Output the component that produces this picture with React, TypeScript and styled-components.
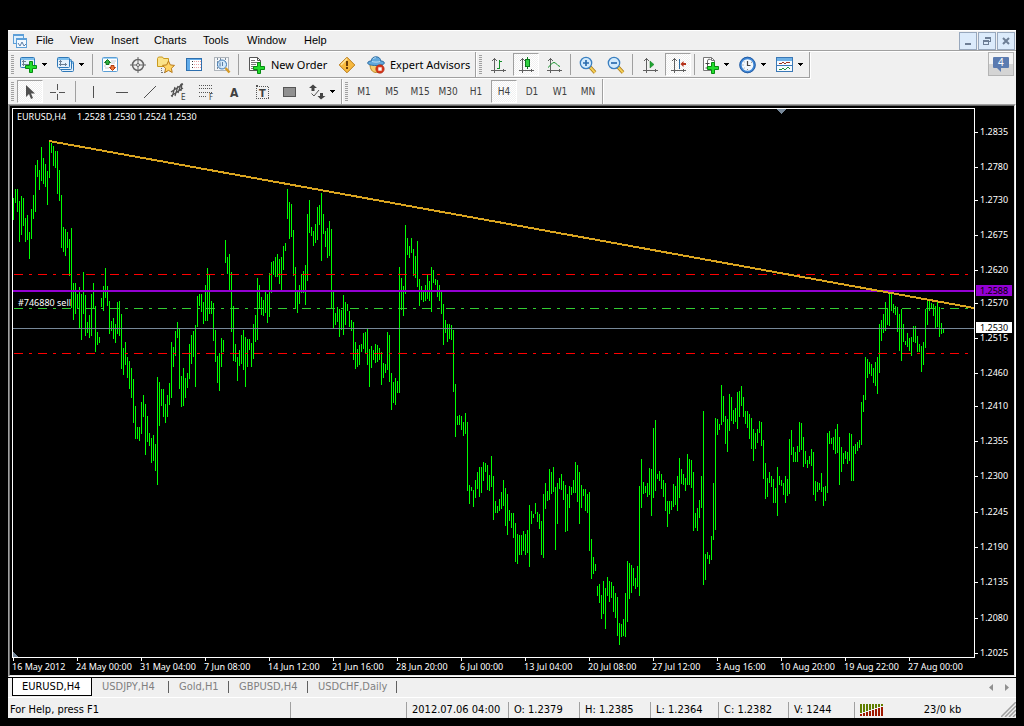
import React from "react";
import styled, { createGlobalStyle, css } from "styled-components";

const GlobalStyle = createGlobalStyle`
  body { margin: 0; background: #000; }
  button { font: inherit; color: inherit; background: none; border: 0; padding: 0; margin: 0; }
`;

const uiFont = `"Noto Sans", "Open Sans", sans-serif`;
const chartFont = `"DejaVu Sans Condensed", "DejaVu Sans", sans-serif`;

const Desktop = styled.div`
  background: #000;
  padding: 30px 8px 8px;
  box-sizing: border-box;
  min-height: 100vh;
`;

const Window = styled.main`
  display: flex;
  flex-direction: column;
  background: #f0f0f0;
  color: #000;
  font-family: ${uiFont};
  font-size: 11px;
  line-height: 16px;
  overflow: hidden;
`;

/* ---------- menu bar ---------- */

const MenuBar = styled.header`
  display: flex;
  align-items: center;
  height: 19px;
  padding-left: 4px;
  border-top: 1px solid #fff;
  border-bottom: 1px solid #a0a0a0;
  box-shadow: 0 1px 0 #fff;
  margin-bottom: 1px;
`;

const Menus = styled.nav`
  display: flex;
  flex: 1;
  margin-left: 8px;
  padding-bottom: 2px;
`;

const MenuItem = styled.button<{ $w: number }>`
  width: ${(p) => p.$w}px;
  text-align: left;
  white-space: nowrap;
  font-family: "Liberation Sans", sans-serif;
`;

const WindowButtons = styled.div`
  display: flex;
  gap: 1px;
  padding-right: 1px;
`;

const WindowButton = styled.button`
  width: 18px;
  height: 18px;
  border: 1px solid #98a8bd;
  background: #dcebfb;
  display: grid;
  place-items: center;
`;

/* ---------- tool bars ---------- */

const ToolRow = styled.div<{ $h: number }>`
  display: flex;
  height: ${(p) => p.$h}px;
`;

const ToolBar = styled.div`
  display: flex;
  align-items: center;
  border-right: 1px solid #a0a0a0;
  border-bottom: 1px solid #a0a0a0;
  box-shadow: 1px 1px 0 #fff;
  margin-bottom: 1px;
`;

const Grip = styled.span`
  width: 3px;
  height: 20px;
  margin: 0 2px 0 3px;
  background: repeating-linear-gradient(#a0a0a0 0 1px, #f0f0f0 1px 2px);
`;

const ToolSeparator = styled.span`
  width: 1px;
  height: 21px;
  margin: 0 3px 0 2px;
  background: #a0a0a0;
`;

const LowerToolBar = styled(ToolBar)`
  border-bottom: 0;
  margin-bottom: 0;

  & > ${ToolSeparator} {
    margin: 0 4px 0 3px;
  }
`;

const ToolButton = styled.button<{ $pressed?: boolean }>`
  width: 26px;
  height: 23px;
  margin: 0 1px;
  display: grid;
  place-items: center;
  box-sizing: border-box;
  font-family: ${chartFont};
  font-size: 10px;
  color: #404040;
  ${(p) =>
    p.$pressed &&
    css`
      background: repeating-conic-gradient(#fff 0 25%, #f0f0f0 0 50%) 0 0 / 2px 2px;
      border: 1px solid;
      border-color: #a0a0a0 #fff #fff #a0a0a0;
    `}
`;

const DropButton = styled.button`
  display: flex;
  align-items: center;
  gap: 4px;
  width: 37px;
  padding-left: 4px;
`;

const LabelButton = styled.button<{ $w: number }>`
  display: flex;
  align-items: center;
  gap: 5px;
  width: ${(p) => p.$w}px;
  padding-left: 6px;
  white-space: nowrap;
`;

const Spacer = styled.span`
  flex: 1;
`;

const ChatButton = styled.button`
  width: 26px;
  height: 24px;
  margin-right: 2px;
  border: 1px solid #b4b4b4;
  background: linear-gradient(#f4f4f4 50%, #d4d4d4 50%);
  display: grid;
  place-items: center;
`;

/* ---------- chart window ---------- */

const ChartFrame = styled.section`
  border: 1px solid;
  border-color: #a0a0a0 #fff #fff #a0a0a0;
`;

const ChartInner = styled.div`
  border: 1px solid;
  border-color: #696969 #e3e3e3 #e3e3e3 #696969;
  background: #000;
`;

const ChartSvg = styled.svg`
  display: block;
  width: 100%;
  height: auto;
  font-family: ${uiFont};
  font-size: 9px;
`;

const Tabs = styled.nav`
  display: flex;
  height: 19px;
  border-top: 1px solid #000;
  padding-left: 4px;
  font-family: ${chartFont};
  font-size: 11px;
`;

const Tab = styled.button<{ $w: number; $active?: boolean }>`
  width: ${(p) => p.$w}px;
  height: 18px;
  box-sizing: border-box;
  padding-left: 10px;
  color: #808080;
  display: flex;
  align-items: center;
  white-space: nowrap;
  ${(p) =>
    p.$active
      ? css`
          padding-left: 9px;
          background: #fff;
          color: #000;
          border: 1px solid #000;
          border-top: 0;
        `
      : css`
          &::after {
            content: "";
            width: 1px;
            height: 12px;
            background: #606060;
            margin-left: auto;
          }
        `}
`;

const TabArrows = styled.div`
  margin-left: auto;
  padding-right: 7px;
  display: flex;
  align-items: center;
  gap: 12px;
`;

/* ---------- status bar ---------- */

const StatusBar = styled.footer`
  display: flex;
  align-items: center;
  height: 17px;
  padding-top: 3px;
  border-top: 1px solid #fff;
  font-family: ${chartFont};
  font-size: 11px;
`;

const StatusCell = styled.span<{ $w?: number; $first?: boolean }>`
  ${(p) => (p.$w ? `flex: 0 0 ${p.$w}px;` : "flex: 1;")}
  height: 16px;
  box-sizing: border-box;
  padding-left: ${(p) => (p.$first ? 2 : 5)}px;
  border-left: ${(p) => (p.$first ? 0 : 1)}px solid #a0a0a0;
  white-space: nowrap;
  display: flex;
  align-items: center;
`;

const Traffic = styled.span`
  flex: 1;
  text-align: center;
`;

/* ---------- icons ---------- */

const IconSvg = styled.svg`
  flex: none;
  overflow: visible;
`;

const Icon = ({ children, smooth, s = 18 }: { children: React.ReactNode; smooth?: boolean; s?: number }) => (
  <IconSvg width={s} height={s} viewBox={`0 0 ${s} ${s}`} shapeRendering={smooth ? "auto" : "crispEdges"} aria-hidden="true">
    {children}
  </IconSvg>
);

const Caret = () => (
  <IconSvg width="5" height="3" viewBox="0 0 5 3" shapeRendering="crispEdges" aria-hidden="true">
    <path d="M0 0h5v1H4v1H3v1H2V2H1V1H0z" fill="#000" />
  </IconSvg>
);

const Plus = ({ x, y }: { x: number; y: number }) => (
  <path
    transform={`translate(${x} ${y})`}
    d="M4.500.5h3v4h4v3h-4v4h-3v-4h-4v-3h4z"
    fill="#22dd2c"
    stroke="#078a12"
  />
);

const Pane = ({ x, y, w, h }: { x: number; y: number; w: number; h: number }) => (
  <g>
    <rect x={x + 0.5} y={y + 0.5} width={w} height={h} rx="1" fill="#e4f1fc" stroke="#2e78b8" />
    <rect x={x + 1} y={y + 1} width={w - 1} height="2" fill="#7fc0ee" />
  </g>
);

const NewChartIcon = () => (
  <Icon smooth>
    <Pane x={0} y={1} w={14} h={10} />
    <path d="M3.500 4v6M2 8.500h8M2 5.500h4" stroke="#6c7f93" fill="none" />
    <Plus x={5} y={5} />
  </Icon>
);

const ProfilesIcon = () => (
  <Icon smooth>
    <Pane x={4} y={5} w={12} h={10} />
    <Pane x={2} y={3} w={12} h={10} />
    <Pane x={0} y={1} w={12} h={10} />
    <path d="M3.500 4v6M2 8.500h8M2 5.500h3M8.500 7v3" stroke="#6c7f93" fill="none" />
  </Icon>
);

const MarketIcon = () => (
  <Icon smooth>
    <rect x="1.500" y="1.500" width="15" height="14" rx="1" fill="#fff" stroke="#5b9fd6" />
    <path d="M2 2h14v1H2z" fill="#a4d2f4" />
    <path d="M10 5h5M4 12h4M10 7h4M3 10h2" stroke="#c5ccd4" />
    <path d="M6.500 3.500l3 3h-1.500v2h-3v-2H3.500z" fill="#2fb040" stroke="#11701e" />
    <path d="M11.500 14.500l-3-3H10v-2h3v2h1.500z" fill="#f07a3c" stroke="#b23c10" />
  </Icon>
);

const CrosshairIcon = () => (
  <Icon smooth>
    <circle cx="9" cy="9" r="5.500" fill="none" stroke="#666" strokeWidth="1.500" />
    <path d="M9 1v16M1 9h16" stroke="#666" />
    <circle cx="9" cy="9" r="1.500" fill="#f0f0f0" stroke="#666" />
  </Icon>
);

const star = "M11.500 5l1.800 3.900 4.200.5-3.100 2.900.8 4.200-3.700-2.100-3.700 2.100.8-4.200-3.100-2.900 4.200-.5z";

const NavigatorIcon = () => (
  <Icon smooth>
    <path d="M.5 2.500l1-1.500h4l1 1.500h5v8H.5z" fill="#fbe389" stroke="#c99a1f" />
    <path d="M4.500 12v5M5 16.500h4" stroke="#777" strokeDasharray="1 1" />
    <path d={star} fill="#ffd566" stroke="#b97a18" />
  </Icon>
);

const TerminalIcon = () => (
  <Icon>
    <rect x="1.500" y="2.500" width="15" height="12" fill="#fff" stroke="#2e6fae" />
    <rect x="2" y="3" width="3" height="11" fill="#62acea" />
    <path d="M9 5.500h7M9 8.500h7M9 11.500h7" stroke="#e8a0a0" strokeDasharray="1 1" />
    <path d="M7 5.500h1M7 8.500h1M7 11.500h1" stroke="#333" />
    <path d="M2 3.500h14" stroke="#62acea" />
  </Icon>
);

const TesterIcon = () => (
  <Icon smooth>
    <rect x="1.500" y="1.500" width="14" height="13" fill="#f4f6f8" stroke="#aeb4ba" />
    <path d="M4.500 2v11M7.500 2v11M12.500 2v6" stroke="#7c8c9c" strokeDasharray="2 1" />
    <circle cx="9" cy="8.500" r="4.500" fill="#cfe8fb" fillOpacity=".85" stroke="#3c78b4" />
    <path d="M7 6.500v4M9.500 6v4" stroke="#5b7fa6" />
    <path d="M12.500 12l4 4.500" stroke="#d59a28" strokeWidth="2.500" />
  </Icon>
);

const OrderIcon = () => (
  <Icon smooth>
    <path d="M1.500 1.500h8l3 3v10h-11z" fill="#fff" stroke="#555" />
    <path d="M9.500 1.500v3h3" fill="none" stroke="#555" />
    <path d="M3 4.500h4M3 6.500h7M3 8.500h5M3 10.500h3M3 12.500h3" stroke="#777" />
    <Plus x={5} y={6} />
  </Icon>
);

const AlertIcon = () => (
  <Icon smooth>
    <path d="M9 1.200L16.800 9 9 16.800 1.200 9z" fill="#f7b93e" stroke="#b87a1a" />
    <path d="M9 2.800L3 9" stroke="#ffe39a" strokeWidth="1.500" />
    <path d="M8 5h2v5H8zM8 11h2v2H8z" fill="#6a3c08" />
  </Icon>
);

const ExpertIcon = () => (
  <Icon smooth>
    <path d="M3 8c0 5 2 8.500 6.500 8.500S15 12 15 8z" fill="#f6cd6c" stroke="#bb8624" />
    <path d="M.7 7c0-1.500 2-2 3.500-2C4.500 2.500 6 .8 9 .8s4.500 1.700 4.800 4.200c1.500 0 3.500.5 3.500 2 0 1.800-4 2.500-8.300 2.500S.7 8.800.7 7z" fill="#62a8dc" stroke="#2f6da3" />
    <path d="M5 5.500c2 .8 6 .8 8 0M6 3c1-1 2-1.300 3-1.300" stroke="#b9def7" fill="none" />
    <circle cx="13" cy="13" r="4.200" fill="#d8391d" stroke="#9e1c0b" strokeWidth=".6" />
    <rect x="11.300" y="11.300" width="3.400" height="3.400" fill="#fff" />
  </Icon>
);

const Axes = ({ children }: { children: React.ReactNode }) => (
  <Icon>
    <path d="M5.500 2v15M2 14.500h15" stroke="#606060" fill="none" />
    <path d="M4 3h3v1H4zM3 4h1v1H3zM7 4h1v1H7zM14 13h1v3h-1z" fill="#606060" />
    {children}
  </Icon>
);

const BarChartIcon = () => (
  <Axes>
    <path d="M10.500 4v9M8 12.500h2M11 5.500h2" stroke="#14902a" fill="none" />
  </Axes>
);

const CandleIcon = () => (
  <Axes>
    <path d="M10.500 1v12" stroke="#0a7a1c" />
    <rect x="8.500" y="3.500" width="4" height="7" fill="#2fd13f" stroke="#0a7a1c" />
  </Axes>
);

const LineChartIcon = () => (
  <Axes>
    <path d="M3 11.500c3-2 3.500-5 6-5s2.500 3 6 4" stroke="#14902a" fill="none" shapeRendering="auto" />
  </Axes>
);

const ZoomIcon = ({ plus }: { plus?: boolean }) => (
  <Icon smooth>
    <path d="M11 11l5 5.500" stroke="#a97412" strokeWidth="3.500" />
    <path d="M11 11l5 5.500" stroke="#f3cf57" strokeWidth="2" />
    <circle cx="7" cy="7" r="5.700" fill="#d2eafc" stroke="#3a7fc0" strokeWidth="1.300" />
    <path d={plus ? "M4 7h6M7 4v6" : "M4 7h6"} stroke="#2b6cae" strokeWidth="1.700" />
  </Icon>
);

const ScrollIcon = () => (
  <Axes>
    <path d="M9 5l4 3.500L9 12z" fill="#1fa832" stroke="#11701e" strokeWidth=".5" shapeRendering="auto" />
  </Axes>
);

const ShiftIcon = () => (
  <Axes>
    <path d="M10.500 3v10" stroke="#2a6aa0" />
    <path d="M11.500 8l3-3v2H17v2h-2.500v2z" fill="#b5321b" shapeRendering="auto" />
  </Axes>
);

const IndicatorIcon = () => (
  <Icon smooth>
    <path d="M1.500 1.500h8l3 3v10h-11z" fill="#fff" stroke="#777" />
    <path d="M9.500 1.500v3h3" fill="none" stroke="#777" />
    <path d="M8.500 3.500c-3-1-3 1-3 3v3c0 2-.5 3-2 2.500M3.500 7.500h4" stroke="#444" fill="none" />
    <Plus x={5} y={6} />
  </Icon>
);

const ClockIcon = () => (
  <Icon smooth>
    <circle cx="8.500" cy="9" r="7" fill="#f2f8fd" stroke="#3f87d6" strokeWidth="2.300" />
    <circle cx="8.500" cy="9" r="7.800" fill="none" stroke="#18498c" strokeWidth=".7" />
    <path d="M8.500 5V9.500H11.500" stroke="#444" fill="none" strokeWidth="1.200" />
    <path d="M8.500 13v1M4.500 9h-1M12 6.500l1-.5M5.500 6l-.8-.5M5.500 12l-.8.5" stroke="#888" />
  </Icon>
);

const TemplateIcon = () => (
  <Icon>
    <rect x=".5" y="1.500" width="16" height="14" fill="#f7fbff" stroke="#3a78b6" />
    <path d="M1 2h15v3H1z" fill="#6fb1e6" />
    <path d="M1 9.500h15" stroke="#3a78b6" />
    <path d="M3 7.500h3M6 6.500h2M8 7.500h2M10 6.500h4" stroke="#a0331f" fill="none" />
    <path d="M3 13.500h3M6 12.500h2M8 13.500h2M10 12.500h1M11 11.500h2M13 12.500h1" stroke="#23913a" fill="none" />
  </Icon>
);

const CursorIcon = () => (
  <Icon smooth>
    <path d="M5 2v12l3-3 2 5 2-1-2-4.500h4z" fill="#505050" />
  </Icon>
);

const CrossIcon = () => (
  <Icon>
    <path d="M8.500 1v6M8.500 11v6M1 9.500h6M10 9.500h6" stroke="#555" />
  </Icon>
);

const StrokeIcon = ({ d, smooth }: { d: string; smooth?: boolean }) => (
  <Icon smooth={smooth}>
    <path d={d} stroke="#505050" fill="none" />
  </Icon>
);

const ToolLetter = styled.text`
  font-family: ${chartFont};
  fill: #404040;
`;

const ChannelIcon = () => (
  <Icon smooth>
    <path d="M2 9L14 1M2 13L14 5M3 14L6 4M6 13l3-10M9 10l3-9M12 8l1-8" stroke="#505050" fill="none" strokeWidth="1.200" />
    <ToolLetter x="12" y="17" fontSize="8">E</ToolLetter>
  </Icon>
);

const FiboIcon = () => (
  <Icon>
    <path d="M2 2.500h14M2 5.500h14M2 9.500h14M2 13.500h8" stroke="#555" strokeDasharray="1 1" />
    <ToolLetter x="12" y="17" fontSize="8">F</ToolLetter>
  </Icon>
);

const TextIcon = () => (
  <Icon>
    <ToolLetter x="5" y="14" fontSize="12" fontWeight="bold">A</ToolLetter>
  </Icon>
);

const TextLabelIcon = () => (
  <Icon>
    <rect x="3.500" y="3.500" width="12" height="12" fill="none" stroke="#555" strokeDasharray="1 1" />
    <rect x="3" y="2" width="2" height="2" fill="#555" />
    <ToolLetter x="6" y="14" fontSize="11" fontWeight="bold">T</ToolLetter>
  </Icon>
);

const RectIcon = () => (
  <Icon>
    <rect x="2.500" y="4.500" width="12" height="9" rx="1" fill="#909090" stroke="#555" />
  </Icon>
);

const ArrowsIcon = () => (
  <Icon smooth>
    <path d="M5 1.500l4 3.500H6.500v3h-3V5H1z" fill="#444" />
    <path d="M3.500 10.500l2.500 2.500 5-6" stroke="#555" fill="none" />
    <path d="M13 16.500L9.500 13H12v-3h3v3h2.500z" fill="#444" />
  </Icon>
);

const AppIcon = () => (
  <Icon s={16}>
    <rect x="1.500" y="1.500" width="10" height="9" fill="#dff0fd" stroke="#5d9fd8" />
    <path d="M2 2h9v1H2z" fill="#5d9fd8" />
    <rect x="4.500" y="5.500" width="10" height="9" fill="#f2f9ff" stroke="#5d9fd8" />
    <path d="M5 6h9v1H5z" fill="#5d9fd8" />
    <path d="M6 10l2 3 2-4 2 4 2-2" stroke="#5c7fa8" fill="none" shapeRendering="auto" />
  </Icon>
);

/* ---------- chart data ---------- */

// High and low of each four-hour bar, as vertical chart coordinates.
const BARS = `
198-220 189-203 189-212 201-242 196-235 198-226 218-242 215-240 232-259 209-239 195-219 165-212 160-177 170-190
147-181 158-184 164-187 171-205 141-178 143-153 146-166 151-168 151-194 170-201 195-248 227-252 229-256 232-248
239-276 228-308 283-320 283-314 294-308 287-328 294-340 272-314 295-336 322-333 315-338 294-336 283-308 306-352
332-345 337-343 298-307 286-311 268-298 286-306 301-334 321-331 318-339 324-343 302-334 301-336 314-369 348-375
342-365 357-378 361-389 368-398 379-423 406-439 427-439 427-441 402-434 395-417 404-455 416-442 433-446 438-463
435-461 444-471 377-485 382-426 389-406 389-417 404-423 395-417 383-405 342-398 347-367 331-356 322-338 328-389
376-407 368-406 378-398 373-388 344-379 335-364 331-357 325-387 296-327 294-306 294-312 302-324 285-321 268-321
275-314 301-314 303-341 330-362 356-383 353-391 338-367 340-352 240-263 257-274 254-291 272-332 306-361 344-362
357-381 350-366 335-364 330-370 337-387 339-367 339-350 343-367 324-359 315-342 278-340 285-308 297-315 300-316
291-313 294-323 273-317 262-293 261-275 257-277 254-277 259-284 257-291 246-270 243-251 189-219 202-239 204-237
230-276 267-309 291-313 285-304 274-293 271-293 265-305 214-281 200-233 227-236 231-246 224-243 207-240 205-225
193-261 214-234 231-247 228-258 221-256 229-308 291-329 313-325 307-322 309-337 310-330 295-335 302-325 304-311
311-327 320-331 322-360 342-369 349-367 345-365 344-352 333-349 332-353 329-365 349-387 346-368 350-360 344-363
345-362 348-360 352-385 363-378 364-373 332-370 335-382 373-410 382-403 378-405 381-393 267-393 278-310 286-316
225-294 238-255 246-258 238-253 249-276 256-278 241-287 279-306 286-300 291-302 285-301 275-299 281-301 267-312
270-283 279-285 280-297 285-301 291-314 304-345 320-333 324-342 324-339 325-340 330-392 384-437 416-425 415-425
416-430 422-436 413-434 422-491 485-504 487-491 490-507 480-498 472-489 467-497 467-493 462-481 463-472 465-490
475-491 456-487 476-520 501-513 506-513 499-511 492-509 480-506 488-526 494-535 510-521 513-528 513-538 523-562
534-564 535-555 535-555 531-551 534-555 530-553 505-567 511-524 514-518 503-514 512-522 514-529 521-555 494-558
483-509 491-501 469-500 472-494 467-492 487-550 483-524 478-489 474-490 481-500 485-532 494-531 486-508 487-495
480-493 462-493 465-502 472-524 485-508 489-496 489-511 494-513 492-551 539-579 557-574 564-571 586-596 584-603
595-619 581-614 588-629 577-596 581-602 582-598 586-612 593-618 597-636 623-645 624-637 619-636 593-637 561-622
563-599 565-593 568-586 578-589 566-587 486-596 459-508 482-494 486-493 483-497 468-495 469-516 428-498 420-491
474-479 471-481 474-489 480-497 483-511 501-527 501-514 501-510 484-507 486-505 476-511 458-498 469-484 474-485
478-491 454-485 459-485 460-488 472-531 513-528 508-531 500-518 476-508 411-585 554-580 552-559 555-564 536-560
483-540 418-530 419-435 424-430 385-425 396-422 416-444 419-452 394-431 397-421 410-424 408-422 392-429 391-417
386-406 397-417 411-424 411-428 414-439 418-449 429-461 433-449 429-443 421-433 422-446 440-479 463-499 478-497
472-483 476-487 479-503 488-503 467-516 476-485 480-486 483-495 476-503 479-496 439-494 430-455 447-462 452-462
446-462 422-452 423-450 437-467 451-464 460-468 456-464 449-466 452-495 481-501 482-492 483-490 473-492 487-506
486-501 433-493 431-444 438-444 437-450 429-454 424-453 437-485 447-472 453-464 451-459 452-464 433-461 434-481
446-481 444-454 442-451 440-448 402-445 395-412 357-400 359-378 362-374 364-376 368-383 362-386 357-394 324-373
320-341 314-333 302-331 308-325 293-326 293-311 304-313 306-315 307-332 314-351 309-361 324-342 341-345 333-347
338-351 337-356 326-342 326-343 336-352 344-352 346-372 342-365 309-348 300-325 300-311 303-309 304-316 306-329
302-327 307-337 323-334 328-333`
  .trim()
  .split(/\s+/)
  .map((pair) => pair.split("-").map(Number));

const barPath = BARS.map(([hi, lo], i) => `M${13.5 + 2 * i} ${hi}V${lo}`).join("");

const PRICES: [string, number][] = [
  ["1.2835", 132], ["1.2780", 167], ["1.2730", 200], ["1.2675", 235], ["1.2620", 270], ["1.2570", 303],
  ["1.2515", 338], ["1.2460", 373], ["1.2410", 406], ["1.2355", 441], ["1.2300", 476], ["1.2245", 512],
  ["1.2190", 547], ["1.2135", 582], ["1.2080", 618], ["1.2025", 653],
];

const DATES = [
  "16 May 2012", "24 May 00:00", "31 May 04:00", "7 Jun 08:00", "14 Jun 12:00", "21 Jun 16:00", "28 Jun 20:00",
  "6 Jul 00:00", "13 Jul 04:00", "20 Jul 08:00", "27 Jul 12:00", "3 Aug 16:00", "10 Aug 20:00", "19 Aug 22:00",
  "27 Aug 00:00",
];

const DASH = "9 6 3 6";

const Chart = () => (
  <ChartSvg viewBox="10 106 1004 569" role="img" aria-label="EURUSD H4 price chart">
    <g shapeRendering="crispEdges" fill="none">
      <path d={barPath} stroke="#00ff00" />
      <path d="M14 274.500H969M14 353.500H969" stroke="#ff0000" strokeDasharray={DASH} />
      <path d="M14 308.500H969" stroke="#32cd32" strokeDasharray={DASH} />
      <path d="M13 328.500H974" stroke="#778899" />
      <path d="M13 291H974" stroke="#9400d3" strokeWidth="2" />
      <path d="M49 141L974 308" stroke="#daa520" strokeWidth="2" />
      <rect x="12.500" y="108.500" width="962" height="549" stroke="#fff" />
      {DATES.map((d, i) => (
        <path key={d} d={`M${13.5 + 64 * i} 658v3`} stroke="#fff" />
      ))}
      {PRICES.map(([p, y]) => (
        <path key={p} d={`M975 ${y + 0.5}h3`} stroke="#fff" />
      ))}
      <path d="M776 109h10l-5 5z" fill="#778899" />
      <path d="M13 652v5h5z" fill="#778899" />
      <rect x="976" y="285" width="36" height="11" fill="#9400d3" />
      <rect x="976" y="322" width="36" height="11" fill="#fff" />
    </g>
    <g fill="#fff">
      <text x="17" y="120">EURUSD,H4</text>
      <text x="77" y="120">1.2528 1.2530 1.2524 1.2530</text>
      <text x="18" y="306">#746880 sell</text>
      {PRICES.map(([p, y]) => (
        <text key={p} x="980" y={y + 3}>{p}</text>
      ))}
      {DATES.map((d, i) => (
        <text key={d} x={12 + 64 * i} y="670">{d}</text>
      ))}
    </g>
    <text x="980" y="294">1.2588</text>
    <text x="980" y="331">1.2530</text>
  </ChartSvg>
);

const MENUS: [string, number][] = [
  ["File", 34], ["View", 41], ["Insert", 43], ["Charts", 49], ["Tools", 44], ["Window", 57], ["Help", 43],
];

const TIMEFRAMES = ["M1", "M5", "M15", "M30", "H1", "H4", "D1", "W1", "MN"];

const TABS: [string, number][] = [
  ["EURUSD,H4", 80], ["USDJPY,H4", 77], ["Gold,H1", 60], ["GBPUSD,H4", 79], ["USDCHF,Daily", 89],
];

const Meter = () => (
  <IconSvg width="24" height="12" viewBox="0 0 24 12" shapeRendering="crispEdges" aria-hidden="true">
    {Array.from({ length: 8 }, (_, i) => (
      <g key={i}>
        <rect x={i * 3} y="0" width="2" height={9 - i} fill="#5f7f00" />
        <rect x={i * 3} y={10 - i} width="2" height={2 + i} fill="#a01800" />
      </g>
    ))}
  </IconSvg>
);

const App = () => (
  <Desktop>
    <GlobalStyle />
    <Window>
      <MenuBar>
        <AppIcon />
        <Menus>
          {MENUS.map(([m, w]) => (
            <MenuItem key={m} $w={w}>{m}</MenuItem>
          ))}
        </Menus>
        <WindowButtons>
          <WindowButton aria-label="Minimize">
            <Icon s={10}><path d="M2 7h6v2H2z" fill="#6e7f96" /></Icon>
          </WindowButton>
          <WindowButton aria-label="Restore">
            <Icon s={10}>
              <path d="M3.500 3V1.500h5v4H7M3 2h6" stroke="#6e7f96" fill="none" />
              <path d="M1.500 4.500h5v4h-5zM1 5.500h6" stroke="#6e7f96" fill="none" />
            </Icon>
          </WindowButton>
          <WindowButton aria-label="Close">
            <Icon s={10} smooth><path d="M2 2l6 6M8 2l-6 6" stroke="#6e7f96" strokeWidth="2" /></Icon>
          </WindowButton>
        </WindowButtons>
      </MenuBar>

      <ToolRow $h={27}>
        <ToolBar>
          <Grip />
          <DropButton aria-label="New chart"><NewChartIcon /><Caret /></DropButton>
          <DropButton aria-label="Profiles"><ProfilesIcon /><Caret /></DropButton>
          <ToolSeparator />
          <ToolButton aria-label="Market watch"><MarketIcon /></ToolButton>
          <ToolButton aria-label="Data window"><CrosshairIcon /></ToolButton>
          <ToolButton aria-label="Navigator"><NavigatorIcon /></ToolButton>
          <ToolButton aria-label="Terminal"><TerminalIcon /></ToolButton>
          <ToolButton aria-label="Strategy tester"><TesterIcon /></ToolButton>
          <ToolSeparator />
          <LabelButton $w={91}><OrderIcon />New Order</LabelButton>
          <ToolButton aria-label="Alerts"><AlertIcon /></ToolButton>
          <LabelButton $w={114}><ExpertIcon />Expert Advisors</LabelButton>
        </ToolBar>
        <ToolBar>
          <Grip />
          <ToolButton aria-label="Bar chart"><BarChartIcon /></ToolButton>
          <ToolButton aria-label="Candlesticks" $pressed><CandleIcon /></ToolButton>
          <ToolButton aria-label="Line chart"><LineChartIcon /></ToolButton>
          <ToolSeparator />
          <ToolButton aria-label="Zoom in"><ZoomIcon plus /></ToolButton>
          <ToolButton aria-label="Zoom out"><ZoomIcon /></ToolButton>
          <ToolSeparator />
          <ToolButton aria-label="Auto scroll"><ScrollIcon /></ToolButton>
          <ToolButton aria-label="Chart shift" $pressed><ShiftIcon /></ToolButton>
          <ToolSeparator />
          <DropButton aria-label="Indicators"><IndicatorIcon /><Caret /></DropButton>
          <DropButton aria-label="Periods"><ClockIcon /><Caret /></DropButton>
          <DropButton aria-label="Templates"><TemplateIcon /><Caret /></DropButton>
        </ToolBar>
        <Spacer />
        <ChatButton aria-label="Messages">
          <IconSvg width="18" height="17" viewBox="0 0 18 17" aria-hidden="true">
            <path d="M2 1h14a1 1 0 0 1 1 1v9a1 1 0 0 1-1 1H9v4l-4-4H2a1 1 0 0 1-1-1V2a1 1 0 0 1 1-1z" fill="#5b7bb0" />
            <text x="6" y="10" fontSize="10" fill="#fff">4</text>
          </IconSvg>
        </ChatButton>
      </ToolRow>

      <ToolRow $h={25}>
        <LowerToolBar>
          <Grip />
          <ToolButton aria-label="Cursor" $pressed><CursorIcon /></ToolButton>
          <ToolButton aria-label="Crosshair"><CrossIcon /></ToolButton>
          <ToolSeparator />
          <ToolButton aria-label="Vertical line"><StrokeIcon d="M8.500 3v12" /></ToolButton>
          <ToolButton aria-label="Horizontal line"><StrokeIcon d="M3 9.500h12" /></ToolButton>
          <ToolButton aria-label="Trendline"><StrokeIcon smooth d="M3 15L15 3" /></ToolButton>
          <ToolButton aria-label="Channel"><ChannelIcon /></ToolButton>
          <ToolButton aria-label="Fibonacci"><FiboIcon /></ToolButton>
          <ToolButton aria-label="Text"><TextIcon /></ToolButton>
          <ToolButton aria-label="Text label"><TextLabelIcon /></ToolButton>
          <ToolButton aria-label="Rectangle"><RectIcon /></ToolButton>
          <DropButton aria-label="Arrows"><ArrowsIcon /><Caret /></DropButton>
        </LowerToolBar>
        <LowerToolBar>
          <Grip />
          {TIMEFRAMES.map((t) => (
            <ToolButton key={t} $pressed={t === "H4"}>{t}</ToolButton>
          ))}
        </LowerToolBar>
      </ToolRow>

      <ChartFrame>
        <ChartInner>
          <Chart />
        </ChartInner>
      </ChartFrame>

      <Tabs>
        {TABS.map(([t, w], i) => (
          <Tab key={t} $w={w} $active={i === 0}>{t}</Tab>
        ))}
        <TabArrows>
          <svg width="4" height="7" viewBox="0 0 4 7" aria-hidden="true"><path d="M4 0v7L0 3.500z" fill="#909090" /></svg>
          <svg width="4" height="7" viewBox="0 0 4 7" aria-hidden="true"><path d="M0 0v7l4-3.500z" fill="#909090" /></svg>
        </TabArrows>
      </Tabs>

      <StatusBar>
        <StatusCell $w={282} $first>For Help, press F1</StatusCell>
        <StatusCell $w={116} />
        <StatusCell $w={102}>2012.07.06 04:00</StatusCell>
        <StatusCell $w={71}>O: 1.2379</StatusCell>
        <StatusCell $w={71}>H: 1.2385</StatusCell>
        <StatusCell $w={68}>L: 1.2364</StatusCell>
        <StatusCell $w={70}>C: 1.2382</StatusCell>
        <StatusCell $w={66}>V: 1244</StatusCell>
        <StatusCell>
          <Meter />
          <Traffic>23/0 kb</Traffic>
          <svg width="15" height="15" viewBox="0 0 15 15" aria-hidden="true">
            <path d="M0 15L15 0M4 15L15 4M8 15l7-7M12 15l3-3" stroke="#a0a0a0" strokeWidth="1.500" />
          </svg>
        </StatusCell>
      </StatusBar>
    </Window>
  </Desktop>
);

export default App;
